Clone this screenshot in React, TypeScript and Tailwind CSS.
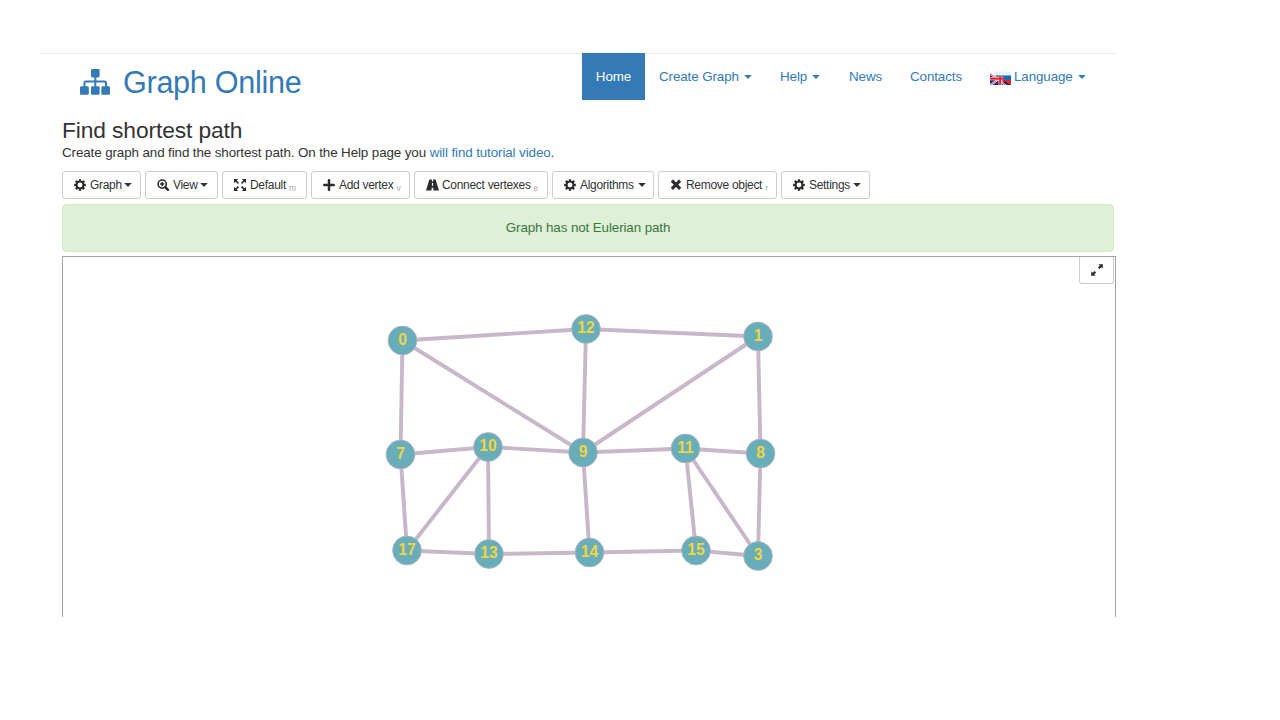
import React from "react";

type IconProps = { className?: string };

const Gear = ({ className = "" }: IconProps) => (
  <svg viewBox="0 0 24 24" className={"h-3 w-3 shrink-0 " + className}>
    <g fill="#2b2b2b">
      <circle cx="12" cy="12" r="8.6" />
      {[0, 45, 90, 135].map((a) => (
        <rect key={a} x="9.6" y="0.3" width="4.8" height="23.4" rx="0.6" transform={`rotate(${a} 12 12)`} />
      ))}
    </g>
    <circle cx="12" cy="12" r="4.9" fill="#fff" />
  </svg>
);

const ZoomIn = () => (
  <svg viewBox="0 0 12 12" className="h-3 w-3 shrink-0" fill="none" stroke="#2b2b2b">
    <circle cx="5.2" cy="5.1" r="4.1" strokeWidth="1.6" />
    <path d="M8.3 8.2l2.7 2.7" strokeWidth="2.4" strokeLinecap="round" />
    <path d="M3.1 5.1h4.2M5.2 3v4.2" strokeWidth="1.5" />
  </svg>
);

const Fullscreen = () => (
  <svg viewBox="0 0 12 12" className="h-3 w-3 shrink-0" fill="#2b2b2b" stroke="#2b2b2b">
    <path stroke="none" d="M0 0h4.2L0 4.2zM12 0H7.8L12 4.2zM0 12h4.2L0 7.8zM12 12H7.8L12 7.8z" />
    <path fill="none" strokeWidth="1.7" d="M1.5 1.5l2.9 2.9M10.5 1.5L7.6 4.4M1.5 10.5l2.9-2.9M10.5 10.5L7.6 7.6" />
  </svg>
);

const Plus = () => (
  <svg viewBox="0 0 12 12" className="h-3 w-3 shrink-0">
    <path d="M1.3 6h9.4M6 1.3v9.4" stroke="#2b2b2b" strokeWidth="2.5" strokeLinecap="round" />
  </svg>
);

const Road = () => (
  <svg viewBox="0 0 13 12" className="h-3 w-[13px] shrink-0" fill="#2b2b2b">
    <path d="M3.4 0.6h2.5v2h1.2v-2h2.5L13 11.4H7.4V8.7H5.6v2.7H0zM5.9 4v2.7h1.2V4z" fillRule="evenodd" />
  </svg>
);

const Cross = () => (
  <svg viewBox="0 0 12 12" className="h-3 w-3 shrink-0">
    <path d="M3 2.7l6 6M9 2.7l-6 6" stroke="#2b2b2b" strokeWidth="3.2" strokeLinecap="square" />
  </svg>
);

const Expand = () => (
  <svg viewBox="0 0 12 12" className="h-3 w-3" fill="#2b2b2b">
    <path d="M7.4 0.2h4.4v4.4l-1.4-1.4-1.9 1.9L6.9 3.5l1.9-1.9zM0.2 7.4v4.4h4.4l-1.4-1.4 1.9-1.9-1.6-1.6-1.9 1.9z" />
  </svg>
);

const Sitemap = () => (
  <svg viewBox="0 0 30 26" className="h-[26px] w-[30px]" fill="#337ab7">
    <rect x="11" y="0" width="8.6" height="8.4" rx="1.3" />
    <rect x="0" y="17.2" width="8.8" height="8.6" rx="1.3" />
    <rect x="11" y="17.2" width="8.6" height="8.6" rx="1.3" />
    <rect x="21.4" y="17.2" width="8.6" height="8.6" rx="1.3" />
    <path d="M15.3 7v11M4.4 18v-4.1q0-1.3 1.3-1.3h19q1.3 0 1.3 1.3V18" fill="none" stroke="#337ab7" strokeWidth="2" />
  </svg>
);

const Flag = () => (
  <svg viewBox="0 0 21 14" className="h-[14px] w-[21px]">
    <path d="M5 4.2h16V9H11z" fill="#0f6cbf" />
    <path d="M3 0.5h18v3.7H8z" fill="#eef3f8" />
    <path d="M11 9h10v5h-5z" fill="#f01c24" />
    <path d="M0 3l3.5 1.2L17 14H0z" fill="#242b70" />
    <path d="M0 2.5L15.5 14M0 14.5l8-6" stroke="#fff" strokeWidth="2" />
    <path d="M0 2.5L15.5 14M0 14.5l8-6" stroke="#e0303c" strokeWidth="0.8" />
    <path d="M0 7.6h13.5M10.2 5V14" stroke="#fff" strokeWidth="3.2" />
    <path d="M0 7.6h14M10.2 5V14" stroke="#e62231" strokeWidth="2.1" />
    <path d="M14 9.6l6.5 4.4H17l-3.6-2.2z" fill="#242b70" />
  </svg>
);

const Caret = ({ className = "" }: IconProps) => (
  <svg viewBox="0 0 8 4" className={"h-1 w-2 shrink-0 " + className} fill="currentColor">
    <path d="M0.2 0h7.6L4 4z" />
  </svg>
);

const Key = ({ children }: { children: string }) => (
  <span className="relative top-[3px] ml-[3px] text-[8.4px] text-[#a6a6a6]">{children}</span>
);

const button =
  "flex h-7 shrink-0 items-center rounded-[3px] border border-[#cccccc] bg-white pl-[11px] text-[12px] tracking-[-0.3px] whitespace-nowrap text-[#333333]";

const nodes: Record<string, [number, number]> = {
  "0": [402.5, 340.5],
  "12": [586, 329],
  "1": [758, 336.5],
  "7": [400.5, 454.5],
  "10": [488, 447],
  "9": [583, 452.5],
  "11": [685.5, 448.5],
  "8": [760.5, 453.5],
  "17": [407, 550.5],
  "13": [489, 554],
  "14": [589.5, 552.5],
  "15": [696, 550.5],
  "3": [758, 556],
};

const edges = [
  ["0", "12"], ["12", "1"], ["0", "7"], ["0", "9"], ["12", "9"], ["1", "9"], ["1", "8"],
  ["7", "10"], ["10", "9"], ["9", "11"], ["11", "8"], ["7", "17"], ["10", "17"], ["10", "13"],
  ["9", "14"], ["11", "15"], ["11", "3"], ["8", "3"], ["17", "13"], ["13", "14"], ["14", "15"], ["15", "3"],
];

const Graph = () => (
  <svg viewBox="63 257 1052 360" className="h-[360px] w-[1052px] shrink-0 tracking-normal">
    <g stroke="#c8b7c9" strokeWidth="3.9">
      {edges.map(([a, b]) => (
        <line key={a + "-" + b} x1={nodes[a][0]} y1={nodes[a][1]} x2={nodes[b][0]} y2={nodes[b][1]} />
      ))}
    </g>
    {Object.entries(nodes).map(([id, [x, y]]) => (
      <g key={id}>
        <circle cx={x} cy={y} r="14.4" fill="#68aeba" stroke="#b5b1c1" strokeWidth="0.9" />
        <text x={x} y={y + 4.2} textAnchor="middle" fontSize="15.6" fontWeight="bold" fill="#f0d543">
          {id}
        </text>
      </g>
    ))}
  </svg>
);

export default function App() {
  return (
    <div className="h-[720px] w-[1280px] overflow-hidden bg-white pt-[53px] font-['Liberation_Sans',Arial,sans-serif] text-[13.4px] tracking-[-0.11px] text-[#333333]">
      <header className="ml-10 flex h-[65px] w-[1076px] border-t border-[#eeeeee] pl-10 text-[#337ab7]">
        <div className="flex w-[502px] items-start">
          <div className="mt-[15px]">
            <Sitemap />
          </div>
          <h1 className="mt-[9px] ml-[13px] text-[30.6px] leading-[38px] tracking-[-0.3px] whitespace-nowrap">Graph Online</h1>
        </div>
        <nav className="-mt-px flex h-[47px] whitespace-nowrap">
          <a className="flex w-[63px] items-center justify-center bg-[#337ab7] pt-px text-white">Home</a>
          <a className="ml-[14px] flex w-[121px] items-center pt-px">Create Graph<Caret className="ml-[5px]" /></a>
          <a className="flex w-[69px] items-center pt-px">Help<Caret className="ml-[5px]" /></a>
          <a className="flex w-[61px] items-center pt-px">News</a>
          <a className="flex w-[80px] items-center pt-px">Contacts</a>
          <a className="flex items-center pt-px"><span className="mt-[2px] mr-[3px]"><Flag /></span>Language<Caret className="ml-[5px]" /></a>
        </nav>
      </header>
      <main className="ml-[62px] w-[1054px]">
        <h2 className="-mt-px mb-px text-[22.8px] leading-[26px] tracking-[-0.12px]">Find shortest path</h2>
        <p className="h-[27px] leading-[18px]">
          Create graph and find the shortest path. On the Help page you{" "}
          <a className="text-[#337ab7]">will find tutorial video</a>.
        </p>
        <div className="flex h-[33px]">
          <button className={button + " mr-1 w-[79px]"}><Gear className="mr-1" />Graph<Caret className="ml-0.5" /></button>
          <button className={button + " mr-1 w-[73px]"}><ZoomIn /><span className="ml-1">View</span><Caret className="ml-0.5" /></button>
          <button className={button + " mr-1 w-[85px]"}><Fullscreen /><span className="ml-1">Default</span><Key>m</Key></button>
          <button className={button + " mr-1 w-[99px]"}><Plus /><span className="ml-1">Add vertex</span><Key>v</Key></button>
          <button className={button + " mr-1 w-[134px]"}><Road /><span className="ml-[3px]">Connect vertexes</span><Key>e</Key></button>
          <button className={button + " mr-1 w-[102px]"}><Gear className="mr-1" />Algorithms<Caret className="ml-1" /></button>
          <button className={button + " mr-1 w-[119px]"}><Cross /><span className="ml-[4px]">Remove object</span><Key>r</Key></button>
          <button className={button + " w-[89px]"}><Gear className="mr-1" />Settings<Caret className="ml-[3px]" /></button>
        </div>
        <div className="mb-1 flex h-12 w-[1052px] items-center justify-center rounded-[4px] border border-[#d6e9c6] bg-[#dff0d8] pt-px text-[#3c763d]">
          Graph has not Eulerian path
        </div>
        <section className="relative h-[361px] w-[1054px] overflow-hidden border-x border-t border-[#a3a3a3]">
          <Graph />
          <button className="absolute top-[-1px] right-[1px] flex h-7 w-[35px] items-center justify-center rounded-b-[3px] border border-t-0 border-[#cccccc] bg-white">
            <Expand />
          </button>
        </section>
      </main>
    </div>
  );
}
